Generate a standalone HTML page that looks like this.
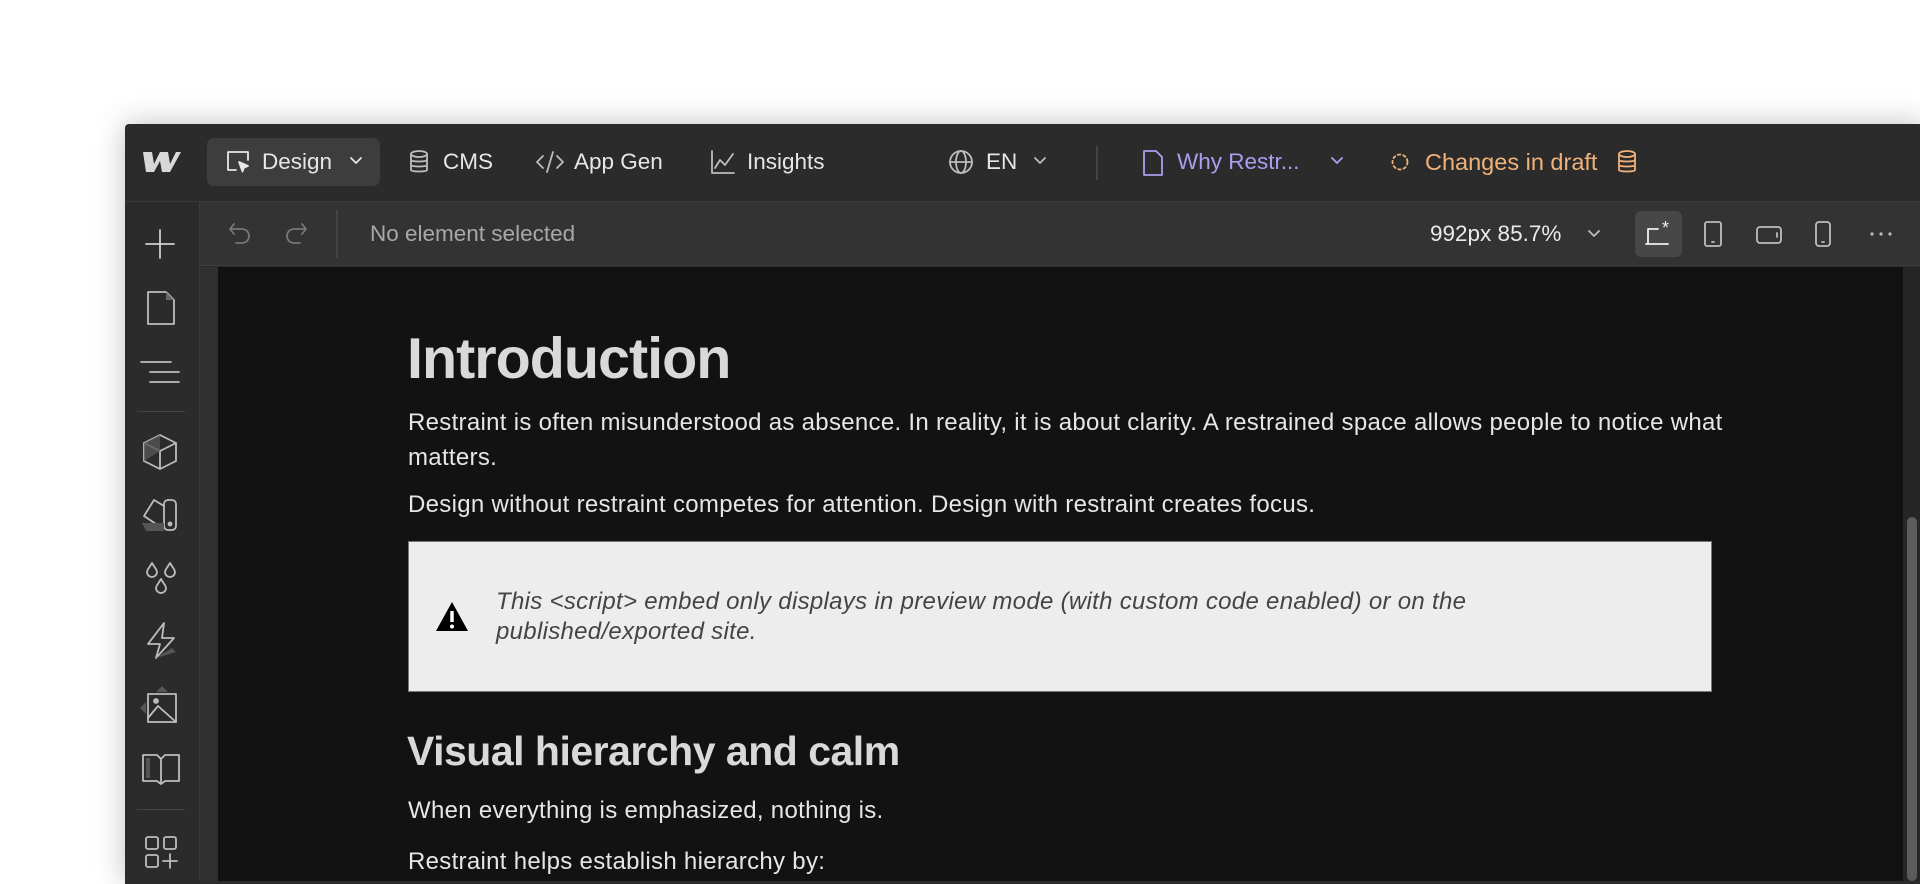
<!DOCTYPE html>
<html><head><meta charset="utf-8"><style>
*{margin:0;padding:0;box-sizing:border-box}
body{width:1920px;height:881px;background:#fff;overflow:hidden;font-family:"Liberation Sans",sans-serif;position:relative}
.win{position:absolute;left:125px;top:124px;width:1800px;height:760px;background:#2b2b2b;border-top-left-radius:4px;box-shadow:0 0 30px rgba(0,0,0,.25)}
.a{position:absolute;white-space:nowrap}
.tb{color:#e6e6e6;font-size:22.5px}
.p{font-size:24px;letter-spacing:.3px;color:#e6e6e6}
svg{position:absolute;overflow:visible}
.ic{fill:none;stroke:#bdbdbd;stroke-width:1.8;stroke-linecap:round;stroke-linejoin:round}
</style></head><body>
<div class="win"></div>
<div class="a" style="left:125px;top:201px;width:1795px;height:1px;background:#3a3a3a"></div>
<svg style="left:143px;top:150px" width="38" height="24" viewBox="0 0 38 24"><path d="M0 2h9l2 12 6-12h8l2 12 6-12h5L27 22h-8l-2-11-6 11H3z" fill="#d8d8d8"/></svg>
<div class="a" style="left:207px;top:138px;width:173px;height:48px;background:#3d3d3d;border-radius:7px"></div>
<svg class="ic" style="left:226px;top:150px" width="26" height="26" viewBox="0 0 26 26"><path d="M10 20H2V2h20v8" stroke="#e6e6e6"/><path d="M13 12l9 4-4 1.5-1.5 4z" fill="#e6e6e6" stroke="#e6e6e6"/></svg>
<div class="a tb" style="left:262px;top:149px">Design</div>
<svg class="ic" style="left:350px;top:157px" width="12" height="8" viewBox="0 0 12 8"><path d="M1 1l5 5 5-5" stroke="#e6e6e6"/></svg>
<svg class="ic" style="left:409px;top:150px" width="20" height="24" viewBox="0 0 20 24"><ellipse cx="10" cy="4" rx="8" ry="3"/><path d="M2 4v16c0 2 16 2 16 0V4M2 10c0 2 16 2 16 0M2 15c0 2 16 2 16 0"/></svg>
<div class="a tb" style="left:443px;top:149px">CMS</div>
<svg class="ic" style="left:536px;top:150px" width="28" height="24" viewBox="0 0 28 24"><path d="M7 6l-6 6 6 6M21 6l6 6-6 6M17 2l-6 20"/></svg>
<div class="a tb" style="left:574px;top:149px">App Gen</div>
<svg class="ic" style="left:711px;top:150px" width="24" height="24" viewBox="0 0 24 24"><path d="M1 1v22h22M4 18l5-8 5 5 8-11"/></svg>
<div class="a tb" style="left:747px;top:149px">Insights</div>
<svg class="ic" style="left:949px;top:150px" width="24" height="24" viewBox="0 0 24 24"><circle cx="12" cy="12" r="11"/><ellipse cx="12" cy="12" rx="5" ry="11"/><path d="M1 12h22"/></svg>
<div class="a tb" style="left:986px;top:149px">EN</div>
<svg class="ic" style="left:1034px;top:157px" width="12" height="8" viewBox="0 0 12 8"><path d="M1 1l5 5 5-5"/></svg>
<div class="a" style="left:1096px;top:146px;width:2px;height:34px;background:#444"></div>
<svg class="ic" style="left:1143px;top:150px" width="20" height="26" viewBox="0 0 20 26"><path d="M1 1h12l6 6v18H1z" stroke="#a99ef0"/></svg>
<div class="a tb" style="left:1177px;top:149px;color:#a99ef0">Why Restr...</div>
<svg class="ic" style="left:1331px;top:157px" width="12" height="8" viewBox="0 0 12 8"><path d="M1 1l5 5 5-5" stroke="#a99ef0"/></svg>
<svg class="ic" style="left:1391px;top:153px" width="18" height="18" viewBox="0 0 18 18"><circle cx="9" cy="9" r="7.5" stroke="#f0b27a" stroke-dasharray="2.5 3"/></svg>
<div class="a tb" style="left:1425px;top:149px;color:#f0b27a;font-size:23.5px">Changes in draft</div>
<svg class="ic" style="left:1617px;top:150px" width="20" height="24" viewBox="0 0 20 24"><ellipse cx="10" cy="4" rx="8" ry="3" stroke="#f0b27a"/><path d="M2 4v16c0 2 16 2 16 0V4M2 10c0 2 16 2 16 0M2 15c0 2 16 2 16 0" stroke="#f0b27a"/></svg>
<div class="a" style="left:200px;top:202px;width:1720px;height:64px;background:#333;border-bottom:1px solid #3e3e3e"></div>
<svg class="ic" style="left:228px;top:222px" width="24" height="22" viewBox="0 0 24 22"><path d="M6 2L2 7l4 5M2 7h12a7 7 0 010 14H8" stroke="#777"/></svg>
<svg class="ic" style="left:284px;top:222px" width="24" height="22" viewBox="0 0 24 22"><path d="M18 2l4 5-4 5M22 7H10a7 7 0 000 14h6" stroke="#777"/></svg>
<div class="a" style="left:336px;top:210px;width:2px;height:48px;background:#444"></div>
<div class="a" style="left:370px;top:221px;font-size:22.5px;color:#a8a8a8">No element selected</div>
<div class="a" style="left:1430px;top:221px;font-size:22.5px;color:#eaeaea">992px 85.7%</div>
<svg class="ic" style="left:1588px;top:230px" width="12" height="8" viewBox="0 0 12 8"><path d="M1 1l5 5 5-5"/></svg>
<div class="a" style="left:1635px;top:211px;width:47px;height:46px;background:#474747;border-radius:6px"></div>
<svg class="ic" style="left:1644px;top:220px" width="30" height="28" viewBox="0 0 30 28"><path d="M2 24h22M4 24V9h10" stroke="#f0f0f0"/><text x="18" y="14" font-size="18" fill="#f0f0f0" stroke="none" font-family="Liberation Sans">*</text></svg>
<svg class="ic" style="left:1704px;top:221px" width="18" height="26" viewBox="0 0 18 26"><rect x="1" y="1" width="16" height="24" rx="2"/><path d="M8 21h2"/></svg>
<svg class="ic" style="left:1756px;top:226px" width="26" height="18" viewBox="0 0 26 18"><rect x="1" y="1" width="24" height="16" rx="3"/><path d="M21 7v4"/></svg>
<svg class="ic" style="left:1815px;top:221px" width="16" height="26" viewBox="0 0 16 26"><rect x="1" y="1" width="14" height="24" rx="3"/><path d="M7 21h2"/></svg>
<svg style="left:1870px;top:232px" width="22" height="4" viewBox="0 0 22 4"><circle cx="2" cy="2" r="1.6" fill="#bbb"/><circle cx="11" cy="2" r="1.6" fill="#bbb"/><circle cx="20" cy="2" r="1.6" fill="#bbb"/></svg>
<div class="a" style="left:199px;top:202px;width:1px;height:679px;background:#3a3a3a"></div>
<svg class="ic" style="left:145px;top:229px" width="30" height="30" viewBox="0 0 30 30"><path d="M15 1v28M1 15h28" stroke="#cfcfcf"/></svg>
<svg class="ic" style="left:147px;top:291px" width="28" height="34" viewBox="0 0 28 34"><path d="M1 1h18l8 8v24H1z"/><path d="M19 1v8h8z" fill="#666" stroke="none"/></svg>
<svg class="ic" style="left:140px;top:360px" width="40" height="24" viewBox="0 0 40 24"><path d="M1 2h30M10 12h29M10 22h29"/></svg>
<div class="a" style="left:137px;top:411px;width:48px;height:1px;background:#444"></div>
<svg class="ic" style="left:143px;top:434px" width="34" height="36" viewBox="0 0 34 36"><path d="M17 1l16 8v18l-16 8-16-8V9zM1 9l16 8 16-8M17 17v18"/><path d="M17 1v16L1 9z M1 9v18l16-10z" fill="#555" stroke="none" opacity=".8"/></svg>
<svg class="ic" style="left:142px;top:498px" width="36" height="36" viewBox="0 0 36 36"><rect x="22" y="2" width="12" height="30" rx="4"/><path d="M22 8L12 2 2 18l18 12"/><path d="M0 25h22v8H4z" fill="#555" stroke="none"/><circle cx="28" cy="26" r="1.5" fill="#bdbdbd"/></svg>
<svg class="ic" style="left:145px;top:561px" width="32" height="36" viewBox="0 0 32 36"><path d="M7 2c-3 5-5 7-5 9a5 5 0 0010 0c0-2-2-4-5-9zM25 2c-3 5-5 7-5 9a5 5 0 0010 0c0-2-2-4-5-9zM16 18c-3 5-5 7-5 9a5 5 0 0010 0c0-2-2-4-5-9z"/></svg>
<svg class="ic" style="left:146px;top:622px" width="30" height="40" viewBox="0 0 30 40"><path d="M18 1L2 22h12l-4 14 18-20H16z"/><path d="M10 36l20-6-4-4z" fill="#555" stroke="none"/></svg>
<svg class="ic" style="left:140px;top:684px" width="38" height="40" viewBox="0 0 38 40"><rect x="8" y="10" width="28" height="28"/><path d="M8 34l10-12 18 16"/><circle cx="16" cy="17" r="2" fill="#bdbdbd"/><path d="M22 2l6 6h-12zM0 24l6-6v12z" fill="#555" stroke="none"/></svg>
<svg class="ic" style="left:142px;top:753px" width="38" height="32" viewBox="0 0 38 32"><path d="M1 2h14l4 4 4-4h14v26H23l-4 3-4-3H1zM19 6v25"/><rect x="4" y="5" width="4" height="20" fill="#555" stroke="none"/></svg>
<div class="a" style="left:137px;top:809px;width:48px;height:1px;background:#444"></div>
<svg class="ic" style="left:145px;top:836px" width="32" height="32" viewBox="0 0 32 32"><rect x="1" y="1" width="12" height="12" rx="2"/><rect x="19" y="1" width="12" height="12" rx="2"/><rect x="1" y="19" width="12" height="12" rx="2"/><path d="M25 18v14M18 25h14"/></svg>
<div class="a" style="left:200px;top:267px;width:18px;height:614px;background:#2f2f2f"></div>
<div class="a" style="left:218px;top:267px;width:1685px;height:614px;background:#121212"></div>
<div class="a" style="left:1903px;top:267px;width:17px;height:614px;background:#262626"></div>
<div class="a" style="left:1907px;top:517px;width:10px;height:364px;background:#5c5c5c;border-radius:5px"></div>
<div class="a" style="left:407px;top:326px;font-size:57.5px;font-weight:bold;color:#d9d9d9;letter-spacing:-1px">Introduction</div>
<div class="a p" style="left:408px;top:405px;line-height:35px">Restraint is often misunderstood as absence. In reality, it is about clarity. A restrained space allows people to notice what<br>matters.</div>
<div class="a p" style="left:408px;top:491px">Design without restraint competes for attention. Design with restraint creates focus.</div>
<div class="a" style="left:408px;top:541px;width:1304px;height:151px;background:#ededed;border:1px solid #777"></div>
<svg style="left:435px;top:601px" width="34" height="31" viewBox="0 0 34 31"><path d="M17 1L33 30H1z" fill="#000"/><path d="M17 10v11" stroke="#fff" stroke-width="3.5"/><circle cx="17" cy="25.5" r="2" fill="#fff"/></svg>
<div class="a" style="left:496px;top:587px;font-size:24px;letter-spacing:.3px;line-height:30px;font-style:italic;color:#444">This &lt;script&gt; embed only displays in preview mode (with custom code enabled) or on the<br>published/exported site.</div>
<div class="a" style="left:407px;top:728px;font-size:41px;font-weight:bold;color:#d9d9d9;letter-spacing:-.5px">Visual hierarchy and calm</div>
<div class="a p" style="left:408px;top:797px">When everything is emphasized, nothing is.</div>
<div class="a p" style="left:408px;top:848px">Restraint helps establish hierarchy by:</div>
</body></html>
